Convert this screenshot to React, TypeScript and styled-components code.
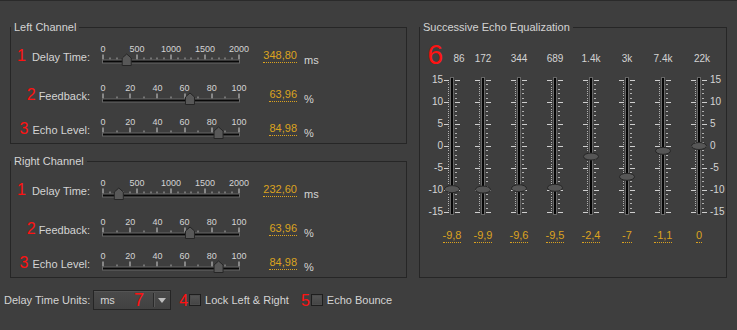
import React from "react";
import styled, { createGlobalStyle } from "styled-components";

const GlobalStyle = createGlobalStyle`
  html, body {
    margin: 0;
    padding: 0;
    background: #3e3e3e;
  }
  body {
    font-family: "Liberation Sans", Arial, sans-serif;
    font-size: 11px;
    color: #d4d4d4;
  }
`;

const Window = styled.div`
  width: 737px;
  height: 330px;
  box-sizing: border-box;
  border-top: 1px solid #2a2a2a;
  padding-top: 19px;
  background: #3e3e3e;
  overflow: hidden;
`;

const Panels = styled.div`
  display: grid;
  grid-template-columns: 397px 308px;
  column-gap: 12px;
  padding-left: 10px;
`;

const LeftColumn = styled.div`
  display: flex;
  flex-direction: column;
  gap: 10px;
`;

const Group = styled.fieldset`
  box-sizing: border-box;
  margin: 0;
  padding: 0 0 3px;
  min-width: 0;
  border: 1px solid #262626;
`;

const Legend = styled.legend`
  padding: 0 3px;
  line-height: 14px;
  color: #d4d4d4;
`;

const Row = styled.div<{ $top: number }>`
  display: flex;
  align-items: flex-start;
  height: 26px;
  margin-top: ${(p) => p.$top}px;
`;

const LabelCell = styled.div`
  width: 79px;
  padding-top: 8px;
  line-height: 13px;
  text-align: right;
  white-space: nowrap;
`;

const Marker = styled.span<{ $size: number; $gap?: number; $before?: number }>`
  color: #ff1212;
  font-size: ${(p) => p.$size}px;
  line-height: 13px;
  margin-right: ${(p) => p.$gap ?? 4}px;
  margin-left: ${(p) => p.$before ?? 0}px;
`;

const SliderBox = styled.svg`
  margin-left: 6px;
  flex: none;
  overflow: visible;
`;

const ValueCell = styled.div`
  width: 45px;
  padding-top: 8px;
  display: flex;
  justify-content: flex-end;
`;

const Value = styled.span`
  color: #dca31f;
  line-height: 13px;
  border-bottom: 1px dotted #dca31f;
`;

const Unit = styled.span`
  margin-left: 7px;
  padding-top: 13px;
  line-height: 13px;
`;

const BottomBar = styled.div`
  display: flex;
  align-items: center;
  height: 20px;
  margin-top: 12px;
  padding-left: 4px;
`;

const Select = styled.div`
  display: flex;
  align-items: center;
  box-sizing: border-box;
  width: 78px;
  height: 20px;
  margin-left: 3px;
  border: 1px solid #252525;
  background: linear-gradient(#4a4a4a, #414141);
  box-shadow: inset 0 1px 0 #545454;
`;

const SelectValue = styled.div`
  flex: 1;
  display: flex;
  align-items: center;
  padding-left: 6px;
  line-height: 13px;
`;

const SelectArrow = styled.div`
  width: 16px;
  height: 14px;
  border-left: 1px solid #2a2a2a;
  box-shadow: inset 1px 0 0 #575757;
  display: flex;
  align-items: center;
  justify-content: center;
`;

const Check = styled.span`
  box-sizing: border-box;
  width: 12px;
  height: 12px;
  margin-left: 1px;
  border: 1px solid #1e1e1e;
  background: linear-gradient(#555, #444);
  box-shadow: inset 0 0 0 1px #4c4c4c;
`;

const CheckLabel = styled.span`
  margin-left: 4px;
  line-height: 13px;
`;

const Option = styled.div<{ $left: number }>`
  display: flex;
  align-items: center;
  margin-left: ${(p) => p.$left}px;
`;

/* equalizer */

const EqBody = styled.div`
  display: flex;
`;

const Column = styled.div<{ $w: number }>`
  width: ${(p) => p.$w}px;
  display: flex;
  flex-direction: column;
  flex: none;
`;

const Header = styled.div<{ $align?: string }>`
  height: 36px;
  box-sizing: border-box;
  padding-bottom: 5px;
  display: flex;
  align-items: flex-end;
  justify-content: ${(p) => p.$align ?? "flex-start"};
`;

const BigMarker = styled.span`
  color: #ff1212;
  font-size: 28px;
  line-height: 24px;
  margin-bottom: -2px;
`;

const Freq = styled.span<{ $cx: number }>`
  width: ${(p) => p.$cx * 2}px;
  text-align: center;
  font-size: 10px;
  line-height: 12px;
  flex: none;
`;

const FaderSvg = styled.svg<{ $cx: number }>`
  margin-top: 4px;
  margin-left: ${(p) => p.$cx - 9}px;
  overflow: visible;
`;

const EqValueWrap = styled.div<{ $cx: number }>`
  width: ${(p) => p.$cx * 2}px;
  margin-top: 11px;
  display: flex;
  justify-content: center;
`;

const Scale = styled.div<{ $side: "left" | "right" }>`
  margin-top: 4px;
  display: flex;
  flex-direction: column;
  gap: 10px;
  text-align: ${(p) => (p.$side === "left" ? "right" : "left")};
  padding-left: ${(p) => (p.$side === "right" ? 1 : 0)}px;
  font-size: 10px;
`;

const ScaleLabel = styled.span`
  line-height: 12px;
  height: 12px;
`;

const TICK = "#cfcfcf";

type SliderProps = { max: number; step: number; minor: number; value: number };

const HSlider = ({ max, step, minor, value }: SliderProps) => {
  const px = (v: number) => 7 + (v / max) * 136;
  const labels: number[] = [];
  for (let v = 0; v <= max; v += step) labels.push(v);
  const ticks: number[] = [];
  for (let v = 0; v <= max; v += minor) ticks.push(v);
  const t = px(value);
  return (
    <SliderBox width={156} height={26}>
      {labels.map((v) => (
        <text
          key={v}
          x={px(v)}
          y={10.5}
          textAnchor="middle"
          fontSize={9}
          fill="#d4d4d4"
          fontFamily="Liberation Sans, Arial, sans-serif"
        >
          {v}
        </text>
      ))}
      {ticks.map((v) => {
        const major = v % step === 0;
        return (
          <rect
            key={v}
            x={Math.round(px(v)) - 0.5}
            y={major ? 13.5 : 16.5}
            width={1}
            height={major ? 5 : 2}
            fill={TICK}
            opacity={major ? 1 : 0.75}
          />
        );
      })}
      <rect x={6} y={18.5} width={138} height={4} fill="#676767" />
      <rect x={7} y={19.5} width={136} height={2} fill="#080808" />
      <polygon
        points={`${t - 4.5},24.5 ${t - 4.5},17 ${t},13 ${t + 4.5},17 ${t + 4.5},24.5`}
        fill="#585858"
        stroke="#262626"
      />
    </SliderBox>
  );
};

type ChannelRow = {
  n: string;
  label: string;
  max: number;
  step: number;
  minor: number;
  value: number;
  text: string;
  unit: string;
  top: number;
  gap: number;
};

const channelRows = (delay: number, delayText: string): ChannelRow[] => [
  { n: "1", label: "Delay Time:", max: 2000, step: 500, minor: 100, value: delay, text: delayText, unit: "ms", top: 7, gap: 6 },
  { n: "2", label: "Feedback:", max: 100, step: 20, minor: 10, value: 63.96, text: "63,96", unit: "%", top: 13, gap: 3 },
  { n: "3", label: "Echo Level:", max: 100, step: 20, minor: 10, value: 84.98, text: "84,98", unit: "%", top: 8, gap: 4 },
];

const Channel = ({ title, rows }: { title: string; rows: ChannelRow[] }) => (
  <Group>
    <Legend>{title}</Legend>
    {rows.map((r) => (
      <Row key={r.label} $top={r.top}>
        <LabelCell>
          <Marker $size={16} $gap={r.gap}>
            {r.n}
          </Marker>
          {r.label}
        </LabelCell>
        <HSlider max={r.max} step={r.step} minor={r.minor} value={r.value} />
        <ValueCell>
          <Value>{r.text}</Value>
        </ValueCell>
        <Unit>{r.unit}</Unit>
      </Row>
    ))}
  </Group>
);

const DB_PX = 4.4;

const Fader = ({ value, cx }: { value: number; cx: number }) => {
  const y = (db: number) => 6 + (15 - db) * DB_PX;
  const marks = [];
  for (let db = -15; db <= 15; db += 1) {
    const yy = Math.round(y(db)) + 0.5;
    if (db % 5 === 0) {
      marks.push(<line key={`l${db}`} x1={1} x2={6} y1={yy} y2={yy} stroke={TICK} />);
      marks.push(<line key={`r${db}`} x1={12} x2={17} y1={yy} y2={yy} stroke={TICK} />);
    } else {
      marks.push(<line key={`r${db}`} x1={12} x2={14} y1={yy} y2={yy} stroke={TICK} opacity={0.8} />);
    }
  }
  for (let i = 0; i <= 60; i++) {
    const yy = Math.round(6 + i * 2.2);
    marks.push(<rect key={`d${i}`} x={5} y={yy} width={1} height={1} fill={TICK} opacity={0.8} />);
  }
  return (
    <FaderSvg $cx={cx} width={18} height={144}>
      {marks}
      <rect x={7} y={3} width={4} height={138} fill="#676767" />
      <rect x={8} y={4} width={2} height={136} fill="#050505" />
      <ellipse cx={9} cy={y(value)} rx={7.5} ry={3.5} fill="#565656" stroke="#262626" />
    </FaderSvg>
  );
};

const bands = [
  { f: "86", v: -9.8, t: "-9,8", w: 22, cx: 9, lx: 16 },
  { f: "172", v: -9.9, t: "-9,9", w: 36, cx: 18, lx: 18 },
  { f: "344", v: -9.6, t: "-9,6", w: 36, cx: 18, lx: 18 },
  { f: "689", v: -9.5, t: "-9,5", w: 36, cx: 18, lx: 18 },
  { f: "1.4k", v: -2.4, t: "-2,4", w: 36, cx: 18, lx: 18 },
  { f: "3k", v: -7, t: "-7", w: 36, cx: 18, lx: 18 },
  { f: "7.4k", v: -1.1, t: "-1,1", w: 36, cx: 18, lx: 18 },
  { f: "22k", v: 0, t: "0", w: 28, cx: 18, lx: 21 },
];

const scaleValues = ["15", "10", "5", "0", "-5", "-10", "-15"];

const Equalizer = () => (
  <Group>
    <Legend>Successive Echo Equalization</Legend>
    <EqBody>
      <Column $w={23}>
        <Header $align="flex-end">
          <BigMarker>6</BigMarker>
        </Header>
        <Scale $side="left">
          {scaleValues.map((s) => (
            <ScaleLabel key={s}>{s}</ScaleLabel>
          ))}
        </Scale>
      </Column>
      {bands.map((b) => (
        <Column key={b.f} $w={b.w}>
          <Header>
            <Freq $cx={b.lx}>{b.f}</Freq>
          </Header>
          <Fader value={b.v} cx={b.cx} />
          <EqValueWrap $cx={b.cx}>
            <Value>{b.t}</Value>
          </EqValueWrap>
        </Column>
      ))}
      <Column $w={20}>
        <Header />
        <Scale $side="right">
          {scaleValues.map((s) => (
            <ScaleLabel key={s}>{s}</ScaleLabel>
          ))}
        </Scale>
      </Column>
    </EqBody>
  </Group>
);

const App = () => {
  return (
    <>
      <GlobalStyle />
      <Window>
        <Panels>
          <LeftColumn>
            <Channel title="Left Channel" rows={channelRows(348.8, "348,80")} />
            <Channel title="Right Channel" rows={channelRows(232.6, "232,60")} />
          </LeftColumn>
          <Equalizer />
        </Panels>
        <BottomBar>
          <span>Delay Time Units:</span>
          <Select>
            <SelectValue>
              ms
              <Marker $size={18} $gap={0} $before={19}>
                7
              </Marker>
            </SelectValue>
            <SelectArrow>
              <svg width={8} height={5}>
                <polygon points="0,0 8,0 4,5" fill="#bdbdbd" />
              </svg>
            </SelectArrow>
          </Select>
          <Option $left={8}>
            <Marker $size={16} $gap={0}>4</Marker>
            <Check />
            <CheckLabel>Lock Left &amp; Right</CheckLabel>
          </Option>
          <Option $left={12}>
            <Marker $size={16} $gap={0}>5</Marker>
            <Check />
            <CheckLabel>Echo Bounce</CheckLabel>
          </Option>
        </BottomBar>
      </Window>
    </>
  );
};

export default App;
